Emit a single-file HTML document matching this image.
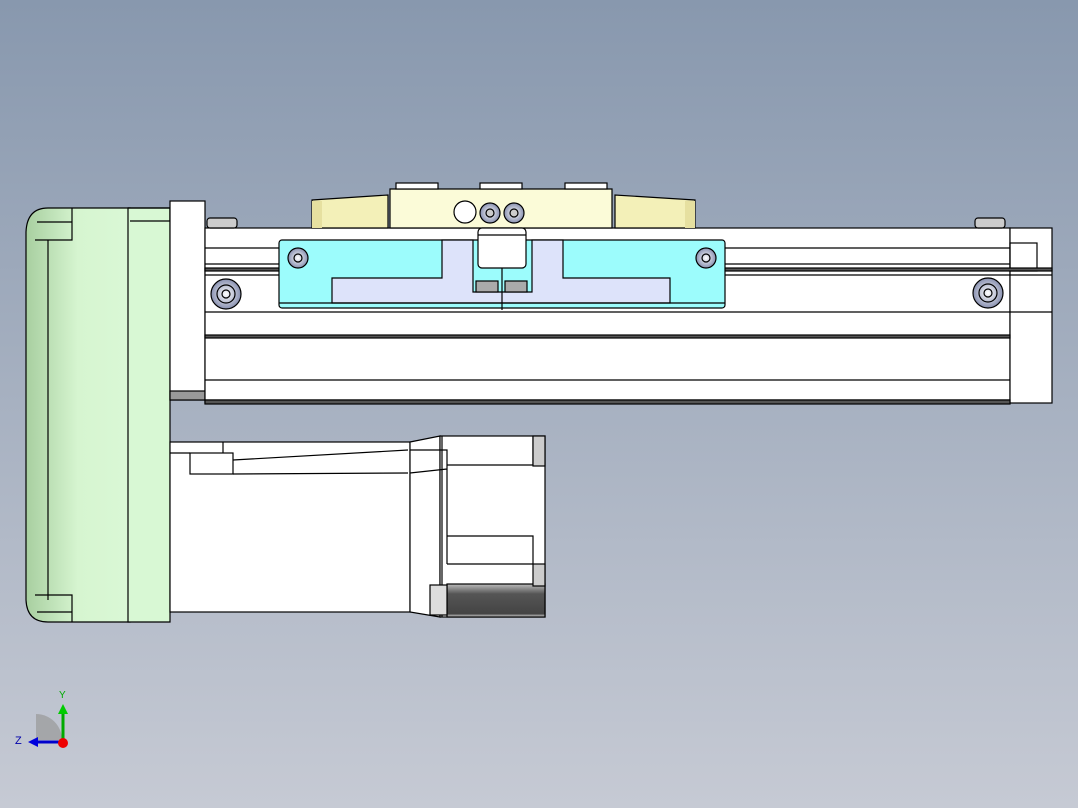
<!DOCTYPE html><html><head><style>body{margin:0}svg{display:block}</style></head><body>
<svg width="1078" height="808" viewBox="0 0 1078 808" xmlns="http://www.w3.org/2000/svg" font-family="Liberation Sans, sans-serif">
<defs>
<linearGradient id="bg" x1="0" y1="0" x2="0" y2="1"><stop offset="0" stop-color="#8898ae"/><stop offset="1" stop-color="#c6cad4"/></linearGradient>
<linearGradient id="gl" x1="0" x2="1"><stop offset="0" stop-color="#a8cfa0"/><stop offset="0.5" stop-color="#d6f5d0"/><stop offset="1" stop-color="#daf8d6"/></linearGradient>
<radialGradient id="sc"><stop offset="0" stop-color="#fff"/><stop offset="1" stop-color="#8890b0"/></radialGradient>
<linearGradient id="dk" x1="0" y1="0" x2="0" y2="1"><stop offset="0" stop-color="#bbb"/><stop offset="0.3" stop-color="#555"/><stop offset="0.9" stop-color="#444"/><stop offset="1" stop-color="#ddd"/></linearGradient>
</defs>
<rect width="1078" height="808" fill="url(#bg)"/>
<g stroke="#000" stroke-width="1.2" fill="none">
<!-- green motor -->
<path d="M48 208 H130 V622 H48 Q27 622 26 600 V232 Q27 208 48 208Z" fill="url(#gl)"/>
<path d="M128 208 H170 V622 H128Z" fill="#d8f8d4"/>
<path d="M128 208 H170 V221 H130"/>
<path d="M37 222 H72 V240 H35 M48 240 V600 M72 208 V222 M35 595 H72 V612 H37 M72 612 V622"/>
<!-- flange -->
<rect x="170" y="201" width="35" height="199" fill="#fff"/>
<rect x="170" y="391" width="35" height="9" fill="#999"/>
<!-- rail -->
<rect x="205" y="228" width="805" height="175" fill="#fff"/>
<rect x="1010" y="228" width="42" height="175" fill="#fff"/>
<rect x="1010" y="243" width="27" height="28"/>
<path d="M205 248 H1010 M205 264 H1010 M205 275 H1052 M205 312 H1052 M205 337 H1010 M205 380 H1010 M205 400 H1010"/>
<rect x="205" y="268" width="847" height="3" fill="#555"/>
<rect x="205" y="335" width="805" height="3" fill="#555"/>
<rect x="205" y="400" width="805" height="4" fill="#555"/>
<rect x="207" y="218" width="30" height="10" rx="3" fill="#ccc"/>
<rect x="975" y="218" width="30" height="10" rx="3" fill="#ccc"/>
<!-- yellow top -->
<path d="M312 200 L388 195 V228 H312Z" fill="#f3f0b8"/>
<path d="M695 200 L615 195 V228 H695Z" fill="#f3f0b8"/>
<rect x="312" y="201" width="10" height="27" fill="#e6e0a0" stroke="none"/>
<rect x="685" y="201" width="10" height="27" fill="#e6e0a0" stroke="none"/>
<path d="M390 189 H612 V228 H390Z" fill="#fbfbd8"/>
<rect x="396" y="183" width="42" height="6" fill="#fff"/>
<rect x="480" y="183" width="42" height="6" fill="#fff"/>
<rect x="565" y="183" width="42" height="6" fill="#fff"/>
<circle cx="465" cy="212" r="11" fill="#fff"/>
<circle cx="490" cy="213" r="10" fill="url(#sc)"/><circle cx="490" cy="213" r="4" fill="#ccc"/>
<circle cx="514" cy="213" r="10" fill="url(#sc)"/><circle cx="514" cy="213" r="4" fill="#ccc"/>
<!-- carriage -->
<rect x="279" y="240" width="446" height="68" rx="3" fill="#9cfcfc"/>
<path d="M442 240 H473 V292 H532 V240 H563 V278 H670 V303 H332 V278 H442Z" fill="#dde3fa"/>
<rect x="478" y="228" width="48" height="40" rx="4" fill="#fff"/>
<path d="M478 235 H526 M502 268 V310 M279 303 H725"/>
<rect x="476" y="281" width="22" height="11" fill="#aaa"/>
<rect x="505" y="281" width="22" height="11" fill="#aaa"/>
<circle cx="298" cy="258" r="10" fill="url(#sc)"/><circle cx="298" cy="258" r="4"/>
<circle cx="706" cy="258" r="10" fill="url(#sc)"/><circle cx="706" cy="258" r="4"/>
<circle cx="226" cy="294" r="15" fill="url(#sc)"/><circle cx="226" cy="294" r="9"/><circle cx="226" cy="294" r="4"/>
<circle cx="988" cy="293" r="15" fill="url(#sc)"/><circle cx="988" cy="293" r="9"/><circle cx="988" cy="293" r="4"/>
<!-- lower motor -->
<rect x="170" y="442" width="240" height="170" fill="#fff"/>
<rect x="190" y="453" width="43" height="21" fill="#fff"/>
<path d="M170 453 H190 M223 442 V453 M233 460 L408 450 M233 474 L408 473"/>
<path d="M410 442 L440 436 V617 L410 612Z" fill="#fff"/>
<rect x="440" y="436" width="105" height="181" fill="#fff"/>
<path d="M410 450 L447 450 V564 M410 473 L447 469 M447 465 H533 V436 M447 536 H533 V564 H447 M442 436 V617"/>
<rect x="447" y="584" width="98" height="33" fill="url(#dk)"/>
<rect x="430" y="585" width="17" height="30" fill="#ddd"/>
<rect x="533" y="436" width="12" height="30" fill="#ccc"/>
<rect x="533" y="564" width="12" height="22" fill="#ccc"/>
</g>
<!-- axes -->
<path d="M62 740 A26 26 0 0 0 36 714 L36 740Z" fill="#999" opacity="0.7" transform="translate(0,0) scale(1)"/>
<path d="M63 742 V712" stroke="#0a0" stroke-width="3"/><path d="M58 714 L63 704 L68 714Z" fill="#0c0"/>
<path d="M63 742 H36" stroke="#00c" stroke-width="3"/><path d="M38 737 L28 742 L38 747Z" fill="#00d"/>
<circle cx="63" cy="743" r="5" fill="#e00"/>
<text x="59" y="698" font-size="10" fill="#0a0">Y</text>
<text x="15" y="744" font-size="11" fill="#00a">Z</text>
</svg></body></html>
